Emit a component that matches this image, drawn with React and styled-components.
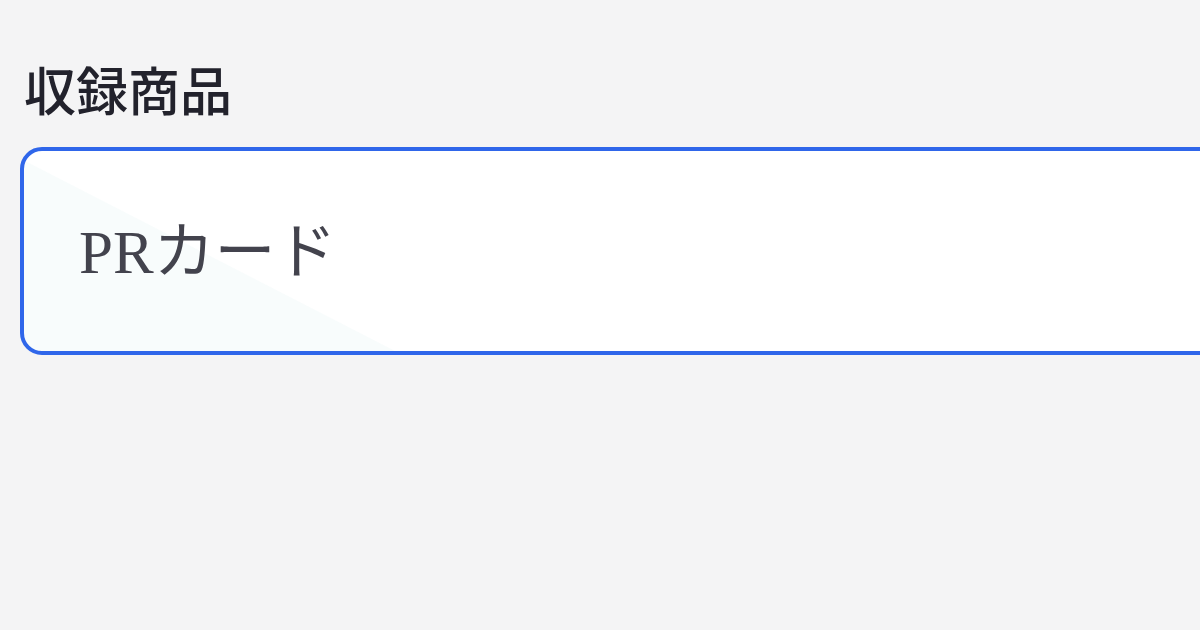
import React from "react";
import styled, { createGlobalStyle } from "styled-components";

const Global = createGlobalStyle`
  html, body {
    margin: 0;
    padding: 0;
    background: #f4f4f5;
    overflow: hidden;
  }
  #root {
    width: 1200px;
    height: 630px;
    overflow: hidden;
  }
`;

const Page = styled.div`
  width: 1200px;
  height: 630px;
  background: #f4f4f5;
  padding: 63px 0 0 20px;
  box-sizing: border-box;
  display: flex;
  flex-direction: column;
  gap: 22px;
  font-family: "Liberation Serif", "Noto Sans CJK JP", serif;
`;

const Label = styled.label`
  font-size: 52px;
  line-height: 62px;
  color: #22222c;
  padding-left: 4px;
  font-weight: 500;
`;

const Field = styled.div`
  width: 1240px;
  height: 208px;
  box-sizing: border-box;
  border: 4px solid #2f66ea;
  border-radius: 22px;
  background-color: #ffffff;
  background-image: linear-gradient(to top right, #f8fcfc 50%, rgba(255, 255, 255, 0) 50.3%);
  background-size: 370px 190px;
  background-position: left bottom;
  background-repeat: no-repeat;
  display: flex;
  align-items: center;
  padding-left: 55px;
`;

const Value = styled.span`
  font-size: 61px;
  line-height: 1;
  color: #43434d;
  margin-top: 2px;
`;

export default function App() {
  return (
    <>
      <Global />
      <Page>
        <Label>収録商品</Label>
        <Field>
          <Value>PRカード</Value>
        </Field>
      </Page>
    </>
  );
}
